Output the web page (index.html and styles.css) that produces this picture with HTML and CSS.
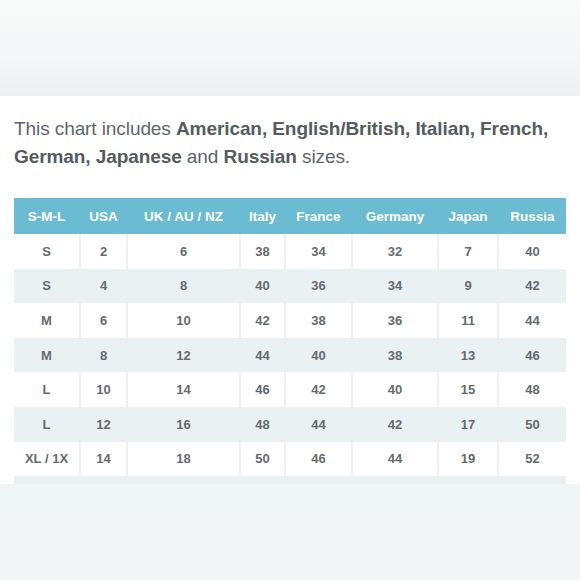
FILE: index.html
```html
<!DOCTYPE html>
<html>
<head>
<meta charset="utf-8">
<link rel="stylesheet" href="styles.css">
</head>
<body>
<div class="top"></div>
<div class="panel">
  <p class="intro">This chart includes <b>American, English/British, Italian, French, German, Japanese</b> and <b>Russian</b> sizes.</p>
  <div class="chart">
    <div class="row head">
      <div>S-M-L</div><div>USA</div><div>UK / AU / NZ</div><div>Italy</div><div>France</div><div>Germany</div><div>Japan</div><div>Russia</div>
    </div>
    <div class="row odd"><div>S</div><div>2</div><div>6</div><div>38</div><div>34</div><div>32</div><div>7</div><div>40</div></div>
    <div class="row even"><div>S</div><div>4</div><div>8</div><div>40</div><div>36</div><div>34</div><div>9</div><div>42</div></div>
    <div class="row odd"><div>M</div><div>6</div><div>10</div><div>42</div><div>38</div><div>36</div><div>11</div><div>44</div></div>
    <div class="row even"><div>M</div><div>8</div><div>12</div><div>44</div><div>40</div><div>38</div><div>13</div><div>46</div></div>
    <div class="row odd"><div>L</div><div>10</div><div>14</div><div>46</div><div>42</div><div>40</div><div>15</div><div>48</div></div>
    <div class="row even"><div>L</div><div>12</div><div>16</div><div>48</div><div>44</div><div>42</div><div>17</div><div>50</div></div>
    <div class="row odd"><div>XL / 1X</div><div>14</div><div>18</div><div>50</div><div>46</div><div>44</div><div>19</div><div>52</div></div>
    <div class="row foot"></div>
  </div>
</div>
<div class="bottom"></div>
</body>
</html>
```
FILE: styles.css
```css
html, body {
  margin: 0;
  padding: 0;
  width: 580px;
  height: 580px;
  overflow: hidden;
  background: #f1f5f6;
  font-family: "Liberation Sans", Arial, sans-serif;
}
.top {
  height: 96px;
  background: linear-gradient(180deg, #f9fafa 0%, #f4f6f7 60%, #edf0f2 100%);
}
.panel {
  background: #ffffff;
  padding: 19px 14px 0 14px;
}
.intro {
  margin: 0 0 27px 0;
  font-size: 19.05px;
  line-height: 28px;
  color: #5e666a;
  letter-spacing: -0.1px;
}
.intro b {
  color: #545c60;
}
.chart {
  width: 552px;
  display: flex;
  flex-direction: column;
}
.row {
  display: grid;
  grid-template-columns: 65px 45px 111px 43px 65px 84px 58px 67px;
  column-gap: 2px;
  height: 34.6px;
  align-items: center;
  font-size: 13px;
  font-weight: bold;
  color: #646b6f;
  text-align: center;
  background: #ebf1f3;
}
.row > div {
  height: 100%;
  display: flex;
  align-items: center;
  justify-content: center;
}
.row.head {
  height: 36px;
  background: #6bbbd2;
  color: #ffffff;
  font-size: 13.5px;
}
.row.odd {
  background: #edf1f3;
}
.row.odd > div {
  background: #ffffff;
}
.row.even {
  background: #eaf1f3;
}
.row.foot {
  height: 8px;
  background: #ebf1f3;
}
.bottom {
  height: 100px;
  background: linear-gradient(180deg, #f0f5f6 0%, #f3f6f7 100%);
}
```
